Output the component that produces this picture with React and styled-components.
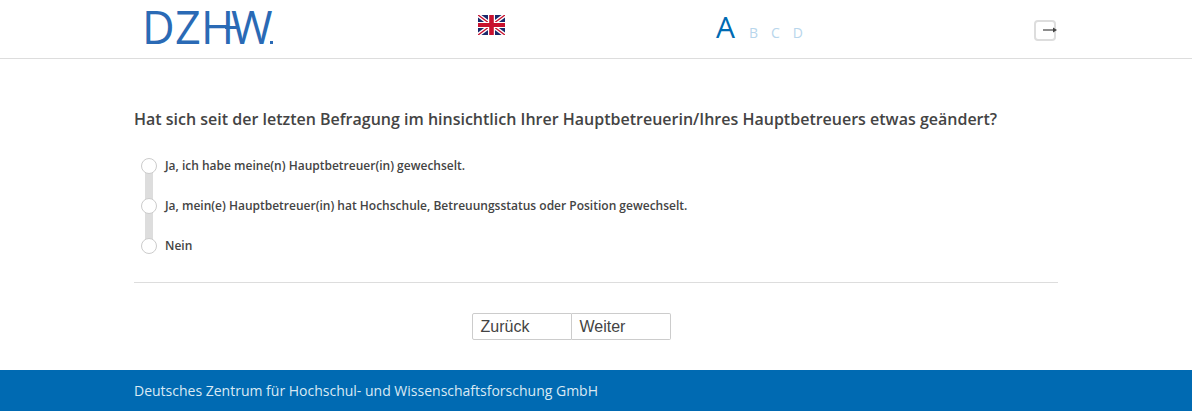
import React from "react";
import styled, { createGlobalStyle } from "styled-components";

const GlobalStyle = createGlobalStyle`
  html, body {
    margin: 0;
    padding: 0;
    background: #fff;
    font-family: "Open Sans", sans-serif;
    color: #444;
  }
`;

const Header = styled.header`
  height: 58px;
  border-bottom: 1px solid #ddd;
  display: grid;
  grid-template-columns: 332px 250px 1fr auto;
  padding: 0 136px 0 134px;
  align-items: start;
`;

const LogoWrap = styled.div`
  padding: 6px 0 0 6px;
  line-height: 0;
`;

const LogoSvg = styled.svg`
  overflow: visible;
`;

const FlagWrap = styled.div`
  padding-top: 15px;
  padding-left: 12px;
  line-height: 0;
`;

const Steps = styled.div`
  display: flex;
  align-items: baseline;
  gap: 13px;
  padding-top: 8px;
`;

const Step = styled.span`
  font-size: ${(p) => (p.$active ? "30px" : "14px")};
  line-height: 38px;
  color: ${(p) => (p.$active ? "#006ab2" : "#b8d6ec")};
  margin-right: ${(p) => (p.$active ? "1px" : "0")};
`;

const LogoutButton = styled.button`
  width: 22px;
  height: 21px;
  margin-top: 20px;
  padding: 0;
  background: #fff;
  border: 2px solid #ddd;
  border-radius: 4px;
  position: relative;
  cursor: pointer;
`;

const LogoutArrow = styled.svg`
  position: absolute;
  left: 7px;
  top: 3px;
`;

const Main = styled.main`
  padding: 0 134px;
`;

const Question = styled.h1`
  margin: 0;
  padding-top: 49px;
  font-size: 16px;
  line-height: 22px;
  font-weight: 600;
  color: #444;
`;

const Options = styled.div`
  position: relative;
  margin-top: 27px;
  padding-left: 7px;
  display: flex;
  flex-direction: column;
  gap: 24px;
`;

const Track = styled.div`
  position: absolute;
  left: 11px;
  top: 9px;
  width: 8px;
  height: 80px;
  background: #ddd;
`;

const Option = styled.label`
  position: relative;
  display: flex;
  align-items: center;
  gap: 8px;
  height: 16px;
  font-size: 12px;
  font-weight: 600;
  color: #444;
  cursor: pointer;
`;

const Radio = styled.span`
  width: 14px;
  height: 14px;
  flex: none;
  align-self: flex-start;
  margin-top: 1px;
  border: 1px solid #ccc;
  border-radius: 50%;
  background: #fff;
`;

const Divider = styled.hr`
  margin: 29px 0 0;
  border: 0;
  border-top: 1px solid #ddd;
`;

const Buttons = styled.div`
  display: flex;
  justify-content: center;
  margin-top: 30px;
  padding-right: 50px;
`;

const NavButton = styled.button`
  width: ${(p) => (p.$first ? "100px" : "99px")};
  height: 27px;
  padding: 0 0 0 8px;
  text-align: left;
  background: #fff;
  border: 1px solid #ccc;
  border-left-width: ${(p) => (p.$first ? "1px" : "0")};
  border-radius: ${(p) => (p.$first ? "2px 0 0 2px" : "0 2px 2px 0")};
  font-family: "Liberation Sans", Arial, sans-serif;
  font-size: 16px;
  color: #444;
  cursor: pointer;
`;

const Footer = styled.footer`
  margin-top: 30px;
  height: 41px;
  background: #006ab2;
  padding: 0 134px;
  display: flex;
  align-items: center;
  font-size: 14px;
  color: #d9e9f4;
`;

const Logo = () => (
  <LogoSvg width="140" height="42" viewBox="0 0 140 42">
    <text
      x="2 35 61 91"
      y="38"
      fontFamily="'Open Sans', sans-serif"
      fontWeight="400"
      fontSize="45"
      fill="#2a6ab5"
    >
      DZHW
    </text>
    <rect x="85" y="20" width="14" height="3" fill="#2a6ab5" />
    <rect x="130" y="35" width="3" height="3" fill="#2a6ab5" />
  </LogoSvg>
);

const Flag = () => (
  <svg width="27" height="20" viewBox="0 0 27 20">
    <rect width="27" height="20" fill="#1a2a6c" />
    <path d="M0 0L27 20M27 0L0 20" stroke="#fff" strokeWidth="4" />
    <path d="M0 0L27 20M27 0L0 20" stroke="#c8102e" strokeWidth="1.4" />
    <rect x="10" width="7" height="20" fill="#fff" />
    <rect y="7" width="27" height="6" fill="#fff" />
    <rect x="11.2" width="4.6" height="20" fill="#c8102e" />
    <rect y="8" width="27" height="4" fill="#c8102e" />
  </svg>
);

const options = [
  "Ja, ich habe meine(n) Hauptbetreuer(in) gewechselt.",
  "Ja, mein(e) Hauptbetreuer(in) hat Hochschule, Betreuungsstatus oder Position gewechselt.",
  "Nein",
];

export default function App() {
  return (
    <>
      <GlobalStyle />
      <Header>
        <LogoWrap>
          <Logo />
        </LogoWrap>
        <FlagWrap>
          <Flag />
        </FlagWrap>
        <Steps>
          <Step $active>A</Step>
          <Step>B</Step>
          <Step>C</Step>
          <Step>D</Step>
        </Steps>
        <LogoutButton aria-label="Abmelden">
          <LogoutArrow width="16" height="10" viewBox="0 0 16 10">
            <path d="M0 5H11" stroke="#444" strokeWidth="1.2" />
            <path d="M10 2.5L14 5L10 7.5Z" fill="#444" />
          </LogoutArrow>
        </LogoutButton>
      </Header>
      <Main>
        <Question>
          Hat sich seit der letzten Befragung im hinsichtlich Ihrer Hauptbetreuerin/Ihres
          Hauptbetreuers etwas geändert?
        </Question>
        <Options>
          <Track />
          {options.map((o) => (
            <Option key={o}>
              <Radio />
              {o}
            </Option>
          ))}
        </Options>
        <Divider />
        <Buttons>
          <NavButton $first>Zurück</NavButton>
          <NavButton>Weiter</NavButton>
        </Buttons>
      </Main>
      <Footer>Deutsches Zentrum für Hochschul- und Wissenschaftsforschung GmbH</Footer>
    </>
  );
}
